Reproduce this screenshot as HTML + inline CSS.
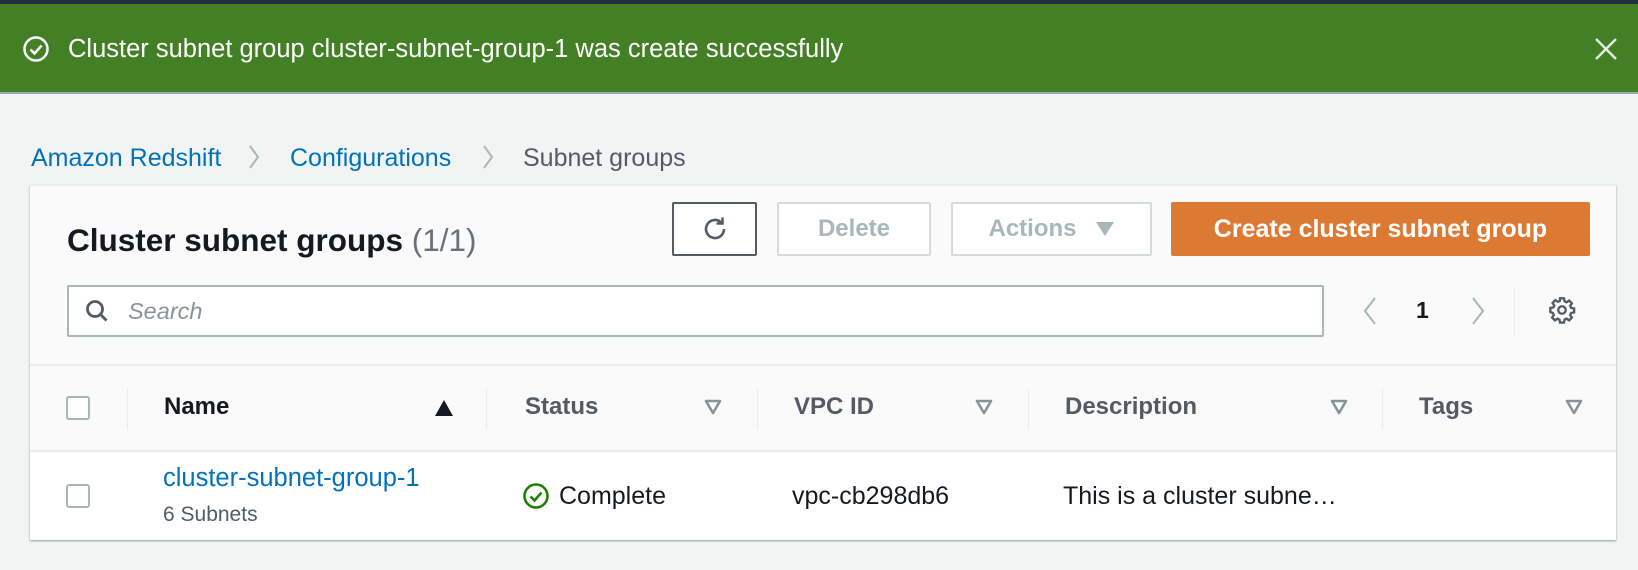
<!DOCTYPE html>
<html><head><meta charset="utf-8"><style>
*{box-sizing:border-box;margin:0;padding:0}
body{width:1638px;height:570px;background:#f2f3f3;font-family:"Liberation Sans",Arial,sans-serif;position:relative;overflow:hidden;color:#16191f}
.abs{position:absolute;white-space:nowrap;line-height:30px}
#top{left:0;top:0;width:1638px;height:4px;background:#232f3e}
#banner{left:0;top:4px;width:1638px;height:90px;background:#437f25;border-bottom:2px solid #9aa}
.btn{position:absolute;border-radius:2px;font-weight:bold;font-size:24px;display:flex;align-items:center;justify-content:center;white-space:nowrap}
.hd{font-weight:bold;font-size:24px;color:#545b64;top:392px}
.tri{top:399px}
.sep{top:388px;width:1px;height:42px;background:#eaeded}
.cb{width:24px;height:24px;border:2px solid #aab7b8;border-radius:3px;background:#fff}
</style></head><body>
<div id="top" class="abs"></div>
<div id="banner" class="abs"></div>
<svg class="abs" style="left:22px;top:35px" width="28" height="28" viewBox="0 0 28 28"><circle cx="14" cy="14" r="11.5" fill="none" stroke="#fff" stroke-width="2.5"/><path d="M8.5 14.5l4 4 7-8" fill="none" stroke="#fff" stroke-width="2.5"/></svg>
<div class="abs" style="left:68px;top:34px;font-size:25.5px;color:#fff">Cluster subnet group cluster-subnet-group-1 was create successfully</div>
<svg class="abs" style="left:1593px;top:36px" width="26" height="26" viewBox="0 0 26 26"><path d="M3 3L23 23M23 3L3 23" stroke="#fff" stroke-width="2.5" opacity=".85"/></svg>

<div class="abs" style="left:31px;top:143px;font-size:25px;color:#0073bb">Amazon Redshift</div>
<svg class="abs" style="left:247px;top:143px" width="14" height="28"><path d="M3 3l8 11-8 11" fill="none" stroke="#aab7b8" stroke-width="2"/></svg>
<div class="abs" style="left:290px;top:143px;font-size:25px;color:#0073bb">Configurations</div>
<svg class="abs" style="left:481px;top:143px" width="14" height="28"><path d="M3 3l8 11-8 11" fill="none" stroke="#aab7b8" stroke-width="2"/></svg>
<div class="abs" style="left:523px;top:143px;font-size:25px;color:#545b64">Subnet groups</div>

<div class="abs" style="left:30px;top:185px;width:1586px;height:355px;background:#fafafa;box-shadow:0 1px 2px rgba(0,28,36,.4);border-top:1px solid #eaeded"></div>
<div class="abs" style="left:30px;top:452px;width:1586px;height:87px;background:#fff"></div>
<div class="abs" style="left:30px;top:364px;width:1586px;height:2px;background:#eaeded"></div>
<div class="abs" style="left:30px;top:450px;width:1586px;height:2px;background:#eaeded"></div>

<div class="abs" style="left:67px;top:223px;font-size:31.5px;font-weight:bold;line-height:34px">Cluster subnet groups <span style="font-weight:normal;color:#687078">(1/1)</span></div>

<div class="btn" style="left:672px;top:202px;width:85px;height:54px;border:2px solid #545b64;background:#fff"><svg width="30" height="30" viewBox="0 0 30 30"><path d="M24 15a9 9 0 1 1-3-6.7" fill="none" stroke="#545b64" stroke-width="2.6"/><path d="M22.5 3.5v6h-6" fill="none" stroke="#545b64" stroke-width="2.6"/></svg></div>
<div class="btn" style="left:777px;top:202px;width:154px;height:54px;border:2px solid #d5dbdb;background:#fff;color:#aab7b8">Delete</div>
<div class="btn" style="left:951px;top:202px;width:201px;height:54px;border:2px solid #d5dbdb;background:#fff;color:#aab7b8">Actions<svg style="margin-left:18px" width="20" height="16"><path d="M1 1h18L10 15z" fill="#aab7b8"/></svg></div>
<div class="btn" style="left:1171px;top:202px;width:419px;height:54px;background:#dc7933;color:#fff;font-size:25px">Create cluster subnet group</div>

<div class="abs" style="left:67px;top:285px;width:1257px;height:52px;border:2px solid #aab7b8;border-radius:2px;background:#fff"></div>
<svg class="abs" style="left:84px;top:298px" width="26" height="26" viewBox="0 0 26 26"><circle cx="11" cy="11" r="7.5" fill="none" stroke="#545b64" stroke-width="2.8"/><path d="M16.5 16.5l6 6" stroke="#545b64" stroke-width="2.8"/></svg>
<div class="abs" style="left:128px;top:296px;font-size:23.5px;font-style:italic;color:#879596">Search</div>

<svg class="abs" style="left:1360px;top:295px" width="20" height="32"><path d="M15 3L5 16l10 13" fill="none" stroke="#aab7b8" stroke-width="2"/></svg>
<div class="abs" style="left:1416px;top:295px;font-size:23px;font-weight:bold">1</div>
<svg class="abs" style="left:1468px;top:295px" width="20" height="32"><path d="M5 3l10 13-10 13" fill="none" stroke="#aab7b8" stroke-width="2"/></svg>
<div class="abs" style="left:1514px;top:288px;width:1px;height:48px;background:#eaeded"></div>
<svg class="abs" style="left:1548px;top:296px" width="28" height="28" viewBox="0 0 24 24"><path d="M10.3 2h3.4l.5 2.6 1.7.8 2.2-1.5 2.4 2.4-1.5 2.2.8 1.7 2.6.5v3.4l-2.6.5-.8 1.7 1.5 2.2-2.4 2.4-2.2-1.5-1.7.8-.5 2.6h-3.4l-.5-2.6-1.7-.8-2.2 1.5-2.4-2.4 1.5-2.2-.8-1.7L2 13.7v-3.4l2.6-.5.8-1.7-1.5-2.2 2.4-2.4 2.2 1.5 1.7-.8z" fill="none" stroke="#545b64" stroke-width="2"/><circle cx="12" cy="12" r="3.2" fill="none" stroke="#545b64" stroke-width="2"/></svg>

<div class="abs cb" style="left:66px;top:396px"></div>
<div class="abs sep" style="left:127px"></div>
<div class="abs hd" style="left:164px;color:#16191f">Name</div>
<svg class="abs tri" style="left:434px" width="20" height="18"><path d="M10 1L19 17H1z" fill="#16191f"/></svg>
<div class="abs sep" style="left:486px"></div>
<div class="abs hd" style="left:525px">Status</div>
<svg class="abs tri" style="left:704px" width="18" height="16"><path d="M2 2h14L9 14z" fill="#fff" stroke="#879596" stroke-width="2.6" stroke-linejoin="round"/></svg>
<div class="abs sep" style="left:757px"></div>
<div class="abs hd" style="left:794px">VPC ID</div>
<svg class="abs tri" style="left:975px" width="18" height="16"><path d="M2 2h14L9 14z" fill="#fff" stroke="#879596" stroke-width="2.6" stroke-linejoin="round"/></svg>
<div class="abs sep" style="left:1028px"></div>
<div class="abs hd" style="left:1065px">Description</div>
<svg class="abs tri" style="left:1330px" width="18" height="16"><path d="M2 2h14L9 14z" fill="#fff" stroke="#879596" stroke-width="2.6" stroke-linejoin="round"/></svg>
<div class="abs sep" style="left:1382px"></div>
<div class="abs hd" style="left:1419px">Tags</div>
<svg class="abs tri" style="left:1565px" width="18" height="16"><path d="M2 2h14L9 14z" fill="#fff" stroke="#879596" stroke-width="2.6" stroke-linejoin="round"/></svg>

<div class="abs cb" style="left:66px;top:484px"></div>
<div class="abs" style="left:163px;top:463px;font-size:25.5px;color:#0073bb">cluster-subnet-group-1</div>
<div class="abs" style="left:163px;top:500px;font-size:21px;color:#545b64">6 Subnets</div>
<svg class="abs" style="left:522px;top:482px" width="28" height="28" viewBox="0 0 28 28"><circle cx="14" cy="14" r="11.5" fill="none" stroke="#1d8102" stroke-width="2.6"/><path d="M8.5 14.5l4 4 7-8" fill="none" stroke="#1d8102" stroke-width="2.6"/></svg>
<div class="abs" style="left:559px;top:481px;font-size:25px">Complete</div>
<div class="abs" style="left:792px;top:481px;font-size:25px">vpc-cb298db6</div>
<div class="abs" style="left:1063px;top:481px;font-size:25px">This is a cluster subne…</div>
</body></html>
